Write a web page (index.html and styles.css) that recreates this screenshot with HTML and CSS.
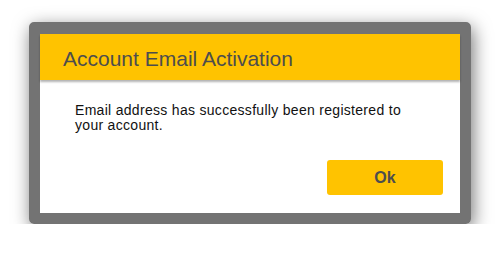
FILE: index.html
```html
<!DOCTYPE html>
<html lang="en">
<head>
    <meta charset="UTF-8">
    <title>Account Email Activation</title>
    <link rel="stylesheet" href="styles.css">
</head>
<body>
    <div class="dialog">
        <div class="dialog-inner">
            <div class="dialog-header">Account Email Activation</div>
            <div class="dialog-body">
                Email address has successfully been registered to<br>your account.
            </div>
            <div class="dialog-actions">
                <button class="ok-button">Ok</button>
            </div>
        </div>
    </div>
</body>
</html>
```

FILE: styles.css
```css
body {
    margin: 0;
    padding: 22px 0 0 29px;
    background-color: #ffffff;
    font-family: "Liberation Sans", Arial, sans-serif;
}
.dialog {
    width: 420px;
    height: 179px;
    border: 11px solid #737373;
    border-top-width: 12px;
    border-radius: 5px;
    box-shadow: 2px 5px 18px rgba(0, 0, 0, 0.55);
}
.dialog-inner {
    height: 100%;
    background-color: #ffffff;
    display: flex;
    flex-direction: column;
}
.dialog-header {
    height: 46px;
    line-height: 49px;
    padding-left: 23px;
    background-color: #ffc300;
    color: #4d4d4d;
    font-size: 21px;
    box-shadow: 0 2px 2px rgba(0, 0, 0, 0.3);
}
.dialog-body {
    padding: 23px 0 0 35px;
    font-size: 14px;
    letter-spacing: 0.3px;
    line-height: 15px;
    color: #111;
}
.dialog-actions {
    margin-top: auto;
    padding: 0 17px 18px 0;
    display: flex;
    justify-content: flex-end;
}
.ok-button {
    width: 116px;
    height: 35px;
    border: none;
    border-radius: 3px;
    background-color: #ffc300;
    color: #4d4d4d;
    font-family: "Liberation Sans", Arial, sans-serif;
    font-size: 16px;
    font-weight: bold;
    cursor: pointer;
}
```
